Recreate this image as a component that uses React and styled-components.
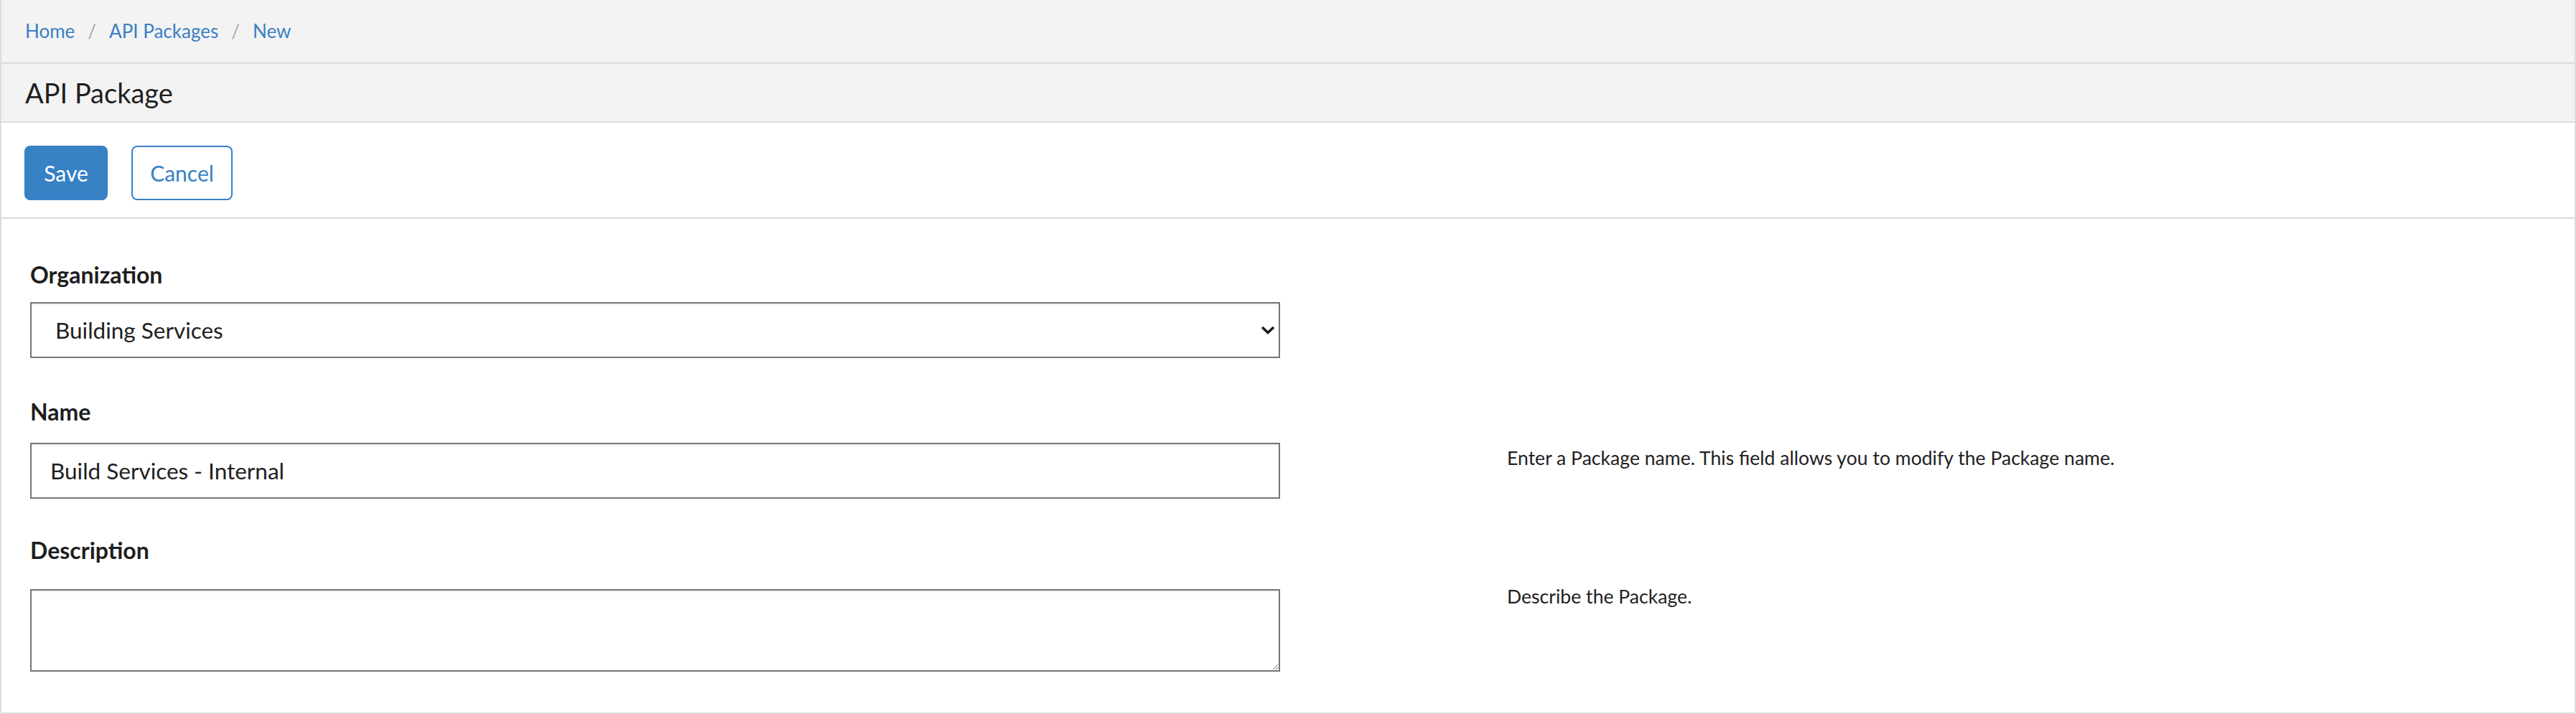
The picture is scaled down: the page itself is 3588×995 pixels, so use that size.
import React from "react";
import styled, { createGlobalStyle } from "styled-components";

const GlobalStyle = createGlobalStyle`
  html, body {
    margin: 0;
    padding: 0;
    background: #ffffff;
  }
  body {
    font-family: "Source Sans Pro", Lato, "Noto Sans", sans-serif;
    color: #212121;
  }
  * {
    box-sizing: border-box;
  }
`;

function App() {
  return (
    <>
      <GlobalStyle />
      <Page>
        <Breadcrumbs>
          <Crumb href='#'>Home</Crumb>
          <Divider>/</Divider>
          <Crumb href='#'>API Packages</Crumb>
          <Divider>/</Divider>
          <Crumb href='#'>New</Crumb>
        </Breadcrumbs>
        <TitleBar>
          <h1>API Package</h1>
        </TitleBar>
        <Toolbar>
          <SaveButton>Save</SaveButton>
          <CancelButton>Cancel</CancelButton>
        </Toolbar>
        <Form>
          <Row top={59}>
            <Field>
              <Label gap={21}>Organization</Label>
              <SelectWrap>
                <Select defaultValue='building'>
                  <option value='building'>Building Services</option>
                </Select>
                <Chevron viewBox='0 0 20 12'>
                  <path
                    d='M2 2 L10 9.5 L18 2'
                    fill='none'
                    stroke='#1b1b1b'
                    strokeWidth='3.6'
                  />
                </Chevron>
              </SelectWrap>
            </Field>
          </Row>
          <Row top={56}>
            <Field>
              <Label gap={26}>Name</Label>
              <Input defaultValue='Build Services - Internal' />
            </Field>
            <Help>
              Enter a Package name. This field allows you to modify the Package
              name.
            </Help>
          </Row>
          <Row top={53}>
            <Field>
              <Label gap={37}>Description</Label>
              <TextArea />
            </Field>
            <Help>Describe the Package.</Help>
          </Row>
        </Form>
      </Page>
    </>
  );
}

const Page = styled.div`
  width: 100%;
  height: 995px;
  display: flex;
  flex-direction: column;
  border: 2px solid #dcdcdc;
  border-top: none;
  background: #ffffff;
`;

const Breadcrumbs = styled.nav`
  height: 89px;
  flex-shrink: 0;
  display: flex;
  align-items: center;
  padding: 0 0 2px 33px;
  background: #f3f3f3;
  border-bottom: 2px solid #dcdcdc;
  font-size: 26px;
`;

const Crumb = styled.a`
  color: #3a7fc4;
  text-decoration: none;
`;

const Divider = styled.span`
  color: #a8a8a8;
  padding: 0 18px;
`;

const TitleBar = styled.div`
  height: 82px;
  flex-shrink: 0;
  display: flex;
  align-items: center;
  padding: 0 33px;
  background: #f3f3f3;
  border-bottom: 2px solid #dcdcdc;
  h1 {
    margin: 0;
    font-size: 38px;
    font-weight: 400;
    color: #1f1f1f;
  }
`;

const Toolbar = styled.div`
  height: 134px;
  flex-shrink: 0;
  display: flex;
  align-items: flex-start;
  gap: 33px;
  padding: 32px 32px 0;
  border-bottom: 2px solid #dcdcdc;
`;

const BaseButton = styled.button`
  height: 76px;
  padding: 0 24px;
  border-radius: 8px;
  border: 2px solid #3781c5;
  font-family: inherit;
  font-size: 30px;
  cursor: pointer;
`;

const SaveButton = styled(BaseButton)`
  width: 116px;
  background: #3781c5;
  color: #ffffff;
`;

const CancelButton = styled(BaseButton)`
  width: 141px;
  background: #ffffff;
  color: #3781c5;
`;

const Form = styled.div`
  flex: 1;
  padding: 0 0 0 40px;
`;

const Row = styled.div`
  display: grid;
  grid-template-columns: 1741px 1fr;
  column-gap: 316px;
  margin-top: ${(p) => p.top}px;
`;

const Field = styled.div`
  display: flex;
  flex-direction: column;
`;

const Label = styled.label`
  font-size: 32px;
  line-height: 38px;
  font-weight: 700;
  color: #1e1e1e;
  margin-bottom: ${(p) => p.gap - 2}px;
`;

const fieldBox = `
  width: 100%;
  border: 2px solid #767676;
  border-radius: 0;
  background: #ffffff;
  box-shadow: inset 0 2px 2px rgba(0, 0, 0, 0.07);
  font-family: inherit;
  font-size: 31.5px;
  color: #212121;
  outline: none;
`;

const SelectWrap = styled.div`
  position: relative;
`;

const Select = styled.select`
  ${fieldBox}
  height: 78px;
  padding: 0 60px 0 33px;
  appearance: none;
  -webkit-appearance: none;
`;

const Chevron = styled.svg`
  position: absolute;
  right: 7px;
  top: 33px;
  width: 20px;
  height: 12px;
  pointer-events: none;
`;

const Input = styled.input`
  ${fieldBox}
  height: 78px;
  padding: 0 26px;
`;

const TextArea = styled.textarea`
  ${fieldBox}
  height: 115px;
  padding: 12px 26px;
  resize: vertical;
  display: block;
`;

const Help = styled.p`
  margin: 0;
  padding-top: 65px;
  font-size: 26.6px;
  line-height: 36px;
  color: #222222;
`;

export default App;
